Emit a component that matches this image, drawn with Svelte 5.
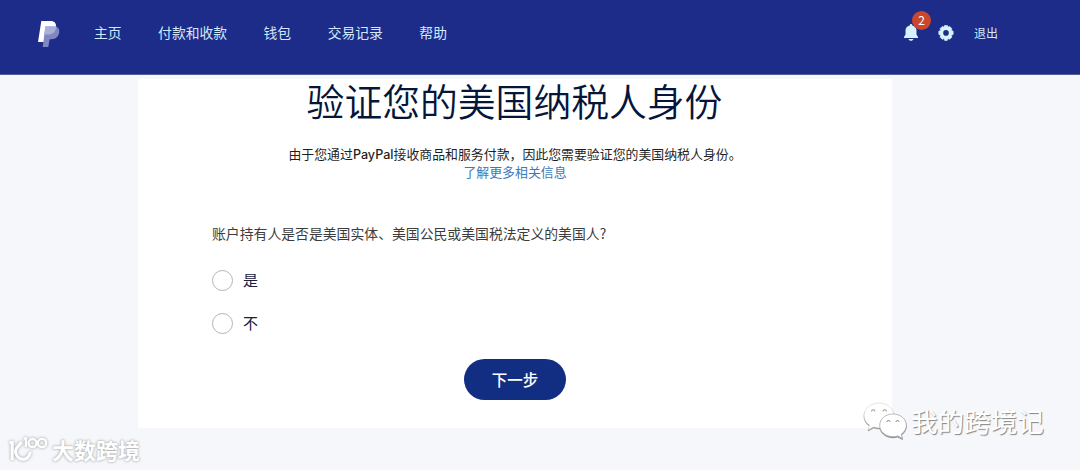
<script lang="ts">
  const links = ['主页', '付款和收款', '钱包', '交易记录', '帮助'];
  const options = ['是', '不'];
  let answer = $state('');
</script>

<div class="page">
  <header class="topbar">
    <svg class="logo" viewBox="0 0 22 26" aria-label="PayPal">
      <path d="M3.300 0h9.500c3.600 0 5.600 2.200 5.200 6L14 13.600H7L5.900 21H0z" fill="#fff" />
      <path d="M7.400 5.500h10.800c2.300 1 3.500 3.200 3 6-.8 4.500-3.600 6.700-7.700 6.700h-1.900L10.300 26H4.700z" fill="#8088c2" />
      <path d="M7.400 5.500h10.900c-.4 5-3.500 8.100-8.300 8.100H6.200z" fill="#a9b0d9" />
    </svg>
    <nav>
      {#each links as link}
        <a href="#top">{link}</a>
      {/each}
    </nav>
    <div class="tools">
      <span class="bell">
        <svg width="14" height="18" viewBox="0 0 14 18" fill="#d9f0ff">
          <path d="M7 0c.9 0 1.300.6 1.300 1.400 2.700.6 4.200 2.400 4.200 5v4.200l1.500 2.400v1H0v-1l1.500-2.400V6.400c0-2.600 1.500-4.400 4.200-5C5.700.6 6.100 0 7 0zM4.500 15h5c-.3 1.200-1.300 1.800-2.500 1.800S4.800 16.200 4.500 15z" />
        </svg>
        <span class="badge">2</span>
      </span>
      <svg class="gear" width="16" height="16" viewBox="0 0 16 16">
        <path d="M6.500.5h3l.6 1.600 1.600-.6 2.300 2.200-.7 1.600 1.900.9v3.200l-1.900.9.7 1.800-2.300 2.200-1.700-.7-.8 1.900H6.700l-.8-1.900-1.700.7-2.200-2.200.7-1.800-1.900-.9V6.200l1.900-.9L2 3.700l2.200-2.200 1.700.6z" fill="#d9f0ff" stroke="#d9f0ff" stroke-width=".6" stroke-linejoin="round" />
        <circle cx="8" cy="7.900" r="2.800" fill="#1c2c88" />
      </svg>
      <a class="logout" href="#top">退出</a>
    </div>
  </header>

  <main class="card">
    <h1>验证您的美国纳税人身份</h1>
    <p class="intro">由于您通过<span>PayPal</span>接收商品和服务付款，因此您需要验证您的美国纳税人身份。</p>
    <a class="more" href="#top">了解更多相关信息</a>

    <div class="question">
      <p>账户持有人是否是美国实体、美国公民或美国税法定义的美国人?</p>
      {#each options as option}
        <label>
          <input type="radio" name="answer" value={option} bind:group={answer} />
          <span>{option}</span>
        </label>
      {/each}
    </div>

    <button>下一步</button>
  </main>

  <div class="mark mark-right">
    <svg width="44" height="38" viewBox="0 0 44 38">
      <path d="M16 1C7.500 1 1 6.500 1 13.500c0 4 2.100 7.300 5.500 9.600L5 28l5.600-2.900c1.800.5 3.600.8 5.500.8C24 25.900 31 20.500 31 13.500S24 1 16 1z" fill="#fff" stroke="#ccc" stroke-width=".5" />
      <path d="M30 12c-7.500 0-13.300 5-13.300 11.300S22.500 34.700 30 34.700c1.800 0 3.300-.3 4.800-.8l4.700 2.600-1.300-4.200c3.100-2.100 5.100-5.300 5.100-9C43.300 17 37.500 12 30 12z" fill="#fff" stroke="#aaa" stroke-width=".8" />
      <path d="M8.500 9.500c.3-2.400 3.200-2.400 3.500 0M20 9.500c.3-2.400 3.200-2.400 3.500 0M24 20c.2-2 2.800-2 3 0M33 20c.2-2 2.800-2 3 0" fill="none" stroke="#999" stroke-width="1.100" />
    </svg>
    <span>我的跨境记</span>
  </div>

  <div class="mark mark-left">
    <svg width="40" height="28" viewBox="0 0 40 28" fill="none" stroke="#fff" stroke-width="3">
      <path d="M.5 7.500h2.700V25M12.500 7l-6 7.500M6.300 14.500c0 12 13.500 13 15 2.500" />
      <path d="M15 3.500h2V12" stroke-width="2.300" />
      <circle cx="23.500" cy="8" r="4" stroke-width="2.300" />
      <circle cx="33" cy="8" r="4.200" stroke-width="2.300" />
    </svg>
    <span>大数跨境</span>
  </div>
</div>

<style>
  :global(body) {
    margin: 0;
    background: #f5f7fb;
  }

  .page {
    position: relative;
    height: 470px;
    overflow: hidden;
    background: #f5f7fb;
    font-family: 'Noto Sans CJK SC', sans-serif;
  }

  a {
    text-decoration: none;
  }

  .topbar {
    display: flex;
    align-items: flex-start;
    box-sizing: border-box;
    height: 75px;
    padding: 21px 82px 0 38px;
    background: #1c2c88;
    border-bottom: 1px solid #535f97;
  }

  .logo {
    width: 22px;
    height: 26px;
    margin-right: 34px;
  }

  nav {
    display: flex;
    flex: 1;
    gap: 36.500px;
    padding-top: 1px;
  }

  nav a {
    color: #d3e8fc;
    font-size: 13.800px;
    line-height: 20px;
  }

  .tools {
    display: flex;
    align-items: flex-start;
  }

  .bell {
    position: relative;
    height: 18px;
    margin: 3px 20px 0 0;
  }

  .bell svg,
  .gear {
    display: block;
  }

  .badge {
    position: absolute;
    top: -13px;
    left: 8px;
    width: 19px;
    height: 19px;
    border-radius: 50%;
    background: #c9472b;
    color: #fff;
    font-size: 12px;
    line-height: 18px;
    text-align: center;
  }

  .gear {
    margin: 4px 20px 0 0;
  }

  .logout {
    padding-top: 2px;
    color: #d3e8fc;
    font-size: 12px;
    line-height: 20px;
  }

  .card {
    display: flex;
    flex-direction: column;
    align-items: center;
    width: 754px;
    height: 349px;
    margin: 4px 0 0 138px;
    background: #fff;
  }

  h1 {
    margin: 0 1px 0 0;
    color: #06153a;
    font-size: 37.800px;
    font-weight: 350;
    line-height: 42px;
  }

  .intro {
    margin: 24px 0 0;
    color: #1f1f1f;
    font-size: 12.900px;
    line-height: 18px;
    white-space: nowrap;
  }

  .intro span {
    font-family: Inter, sans-serif;
    font-size: 12.600px;
    font-weight: 500;
  }

  .more {
    margin-top: -1px;
    color: #3e78b8;
    font-size: 12.900px;
    line-height: 18px;
  }

  .question {
    align-self: stretch;
    margin: 42px 0 0 74px;
  }

  .question p {
    margin: 0 0 26px;
    color: #3c3c3c;
    font-size: 13.850px;
    line-height: 20px;
  }

  label {
    display: flex;
    align-items: center;
    height: 22px;
    margin-bottom: 21px;
    color: #17213f;
    font-size: 15px;
  }

  label span {
    margin-top: -2px;
  }

  input {
    appearance: none;
    width: 21px;
    height: 21px;
    margin: 0 10px 0 0;
    border: 1px solid #b3b3b3;
    border-radius: 50%;
    background: #fff;
  }

  input:checked {
    border: 6px solid #142c8e;
  }

  button {
    width: 102px;
    height: 41px;
    margin-top: 4px;
    padding: 0 0 2px;
    border: 0;
    border-radius: 21px;
    background: #112e82;
    color: #fff;
    font: 500 15.500px 'Noto Sans CJK SC', sans-serif;
    cursor: pointer;
  }

  .mark {
    position: absolute;
    display: flex;
    align-items: center;
    color: #fff;
    white-space: nowrap;
    pointer-events: none;
  }

  .mark-right {
    top: 402px;
    left: 863px;
    gap: 4px;
    font-size: 26.600px;
    font-weight: 400;
    line-height: 36px;
    text-shadow: 1px 1px 1px #858585;
  }

  .mark-right svg {
    filter: drop-shadow(0.5px 1px 0.7px #888);
  }

  .mark-left {
    top: 432px;
    left: 9px;
    gap: 3px;
    font-size: 22px;
    font-weight: 700;
    line-height: 34px;
    text-shadow: 0 0 2px #aaa, 0 0 3px #bbb;
  }

  .mark-left svg {
    filter: drop-shadow(0 0 1.5px #999);
  }
</style>
